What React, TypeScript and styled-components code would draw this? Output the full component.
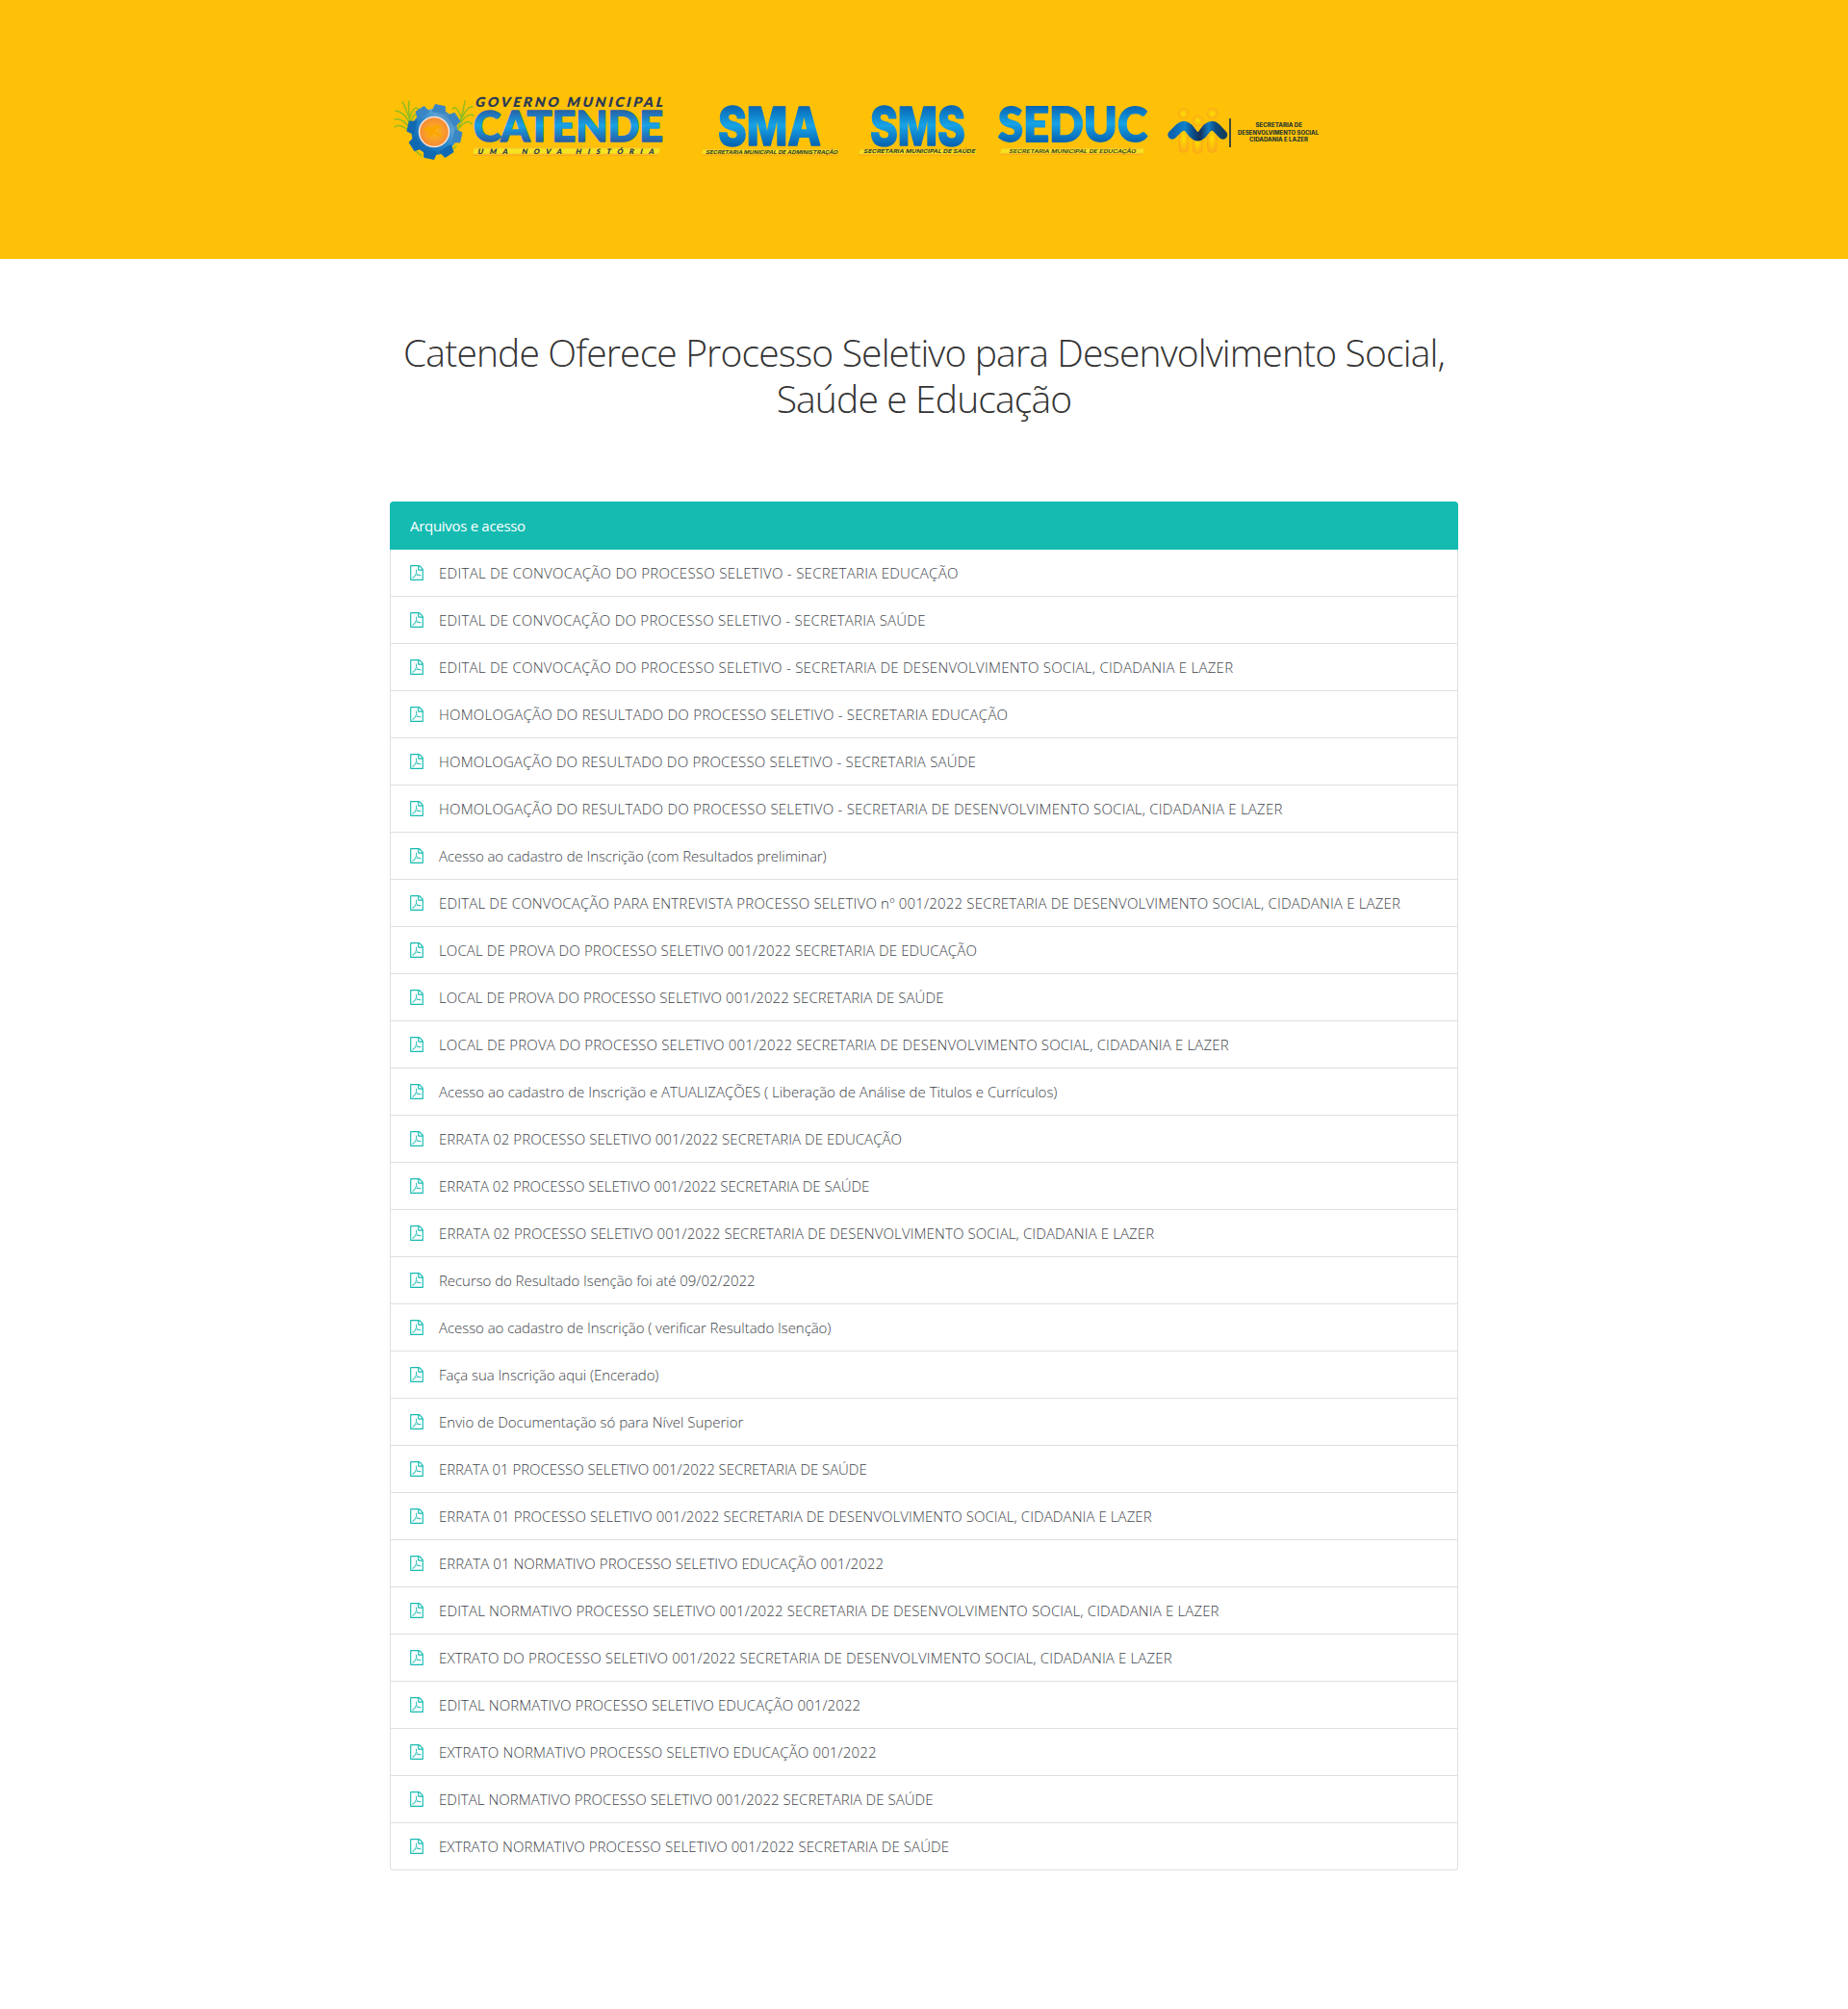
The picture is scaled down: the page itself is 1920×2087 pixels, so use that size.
import React from "react";
import styled, { createGlobalStyle } from "styled-components";

const GlobalStyle = createGlobalStyle`
  *, *::before, *::after { box-sizing: border-box; }
  body {
    margin: 0;
    background: #fff;
    color: #212529;
    font-family: "Segoe UI", "Open Sans", "Noto Sans", sans-serif;
    font-size: 16px;
    font-weight: 300;
    line-height: 24px;
  }
`;

const Header = styled.header`
  height: 269px;
  padding-top: 95px;
  background: #ffc107;
`;

const Container = styled.div`
  width: 1110px;
  margin: 0 auto;
`;

const LogoRow = styled(Container)`
  display: flex;
  align-items: flex-start;
`;

const Logo = styled.svg`
  display: block;
  flex: none;
  height: 75px;
  overflow: visible;
`;

const Title = styled.h1`
  margin: 73px 0 0;
  height: 179px;
  text-align: center;
  font-size: 39px;
  font-weight: 300;
  line-height: 48px;
  letter-spacing: -0.85px;
  white-space: nowrap;
  color: #333;
`;

const List = styled.ul`
  margin: 0 0 144px;
  padding: 0;
  list-style: none;
`;

const ListHeader = styled.li`
  height: 50px;
  padding: 13px 21px;
  border-radius: 4px 4px 0 0;
  background: #15bbb1;
  color: #fff;
  font-size: 15px;
  font-weight: 400;
  letter-spacing: -0.3px;
`;

const Item = styled.li`
  display: flex;
  align-items: center;
  height: 49px;
  padding: 0 20px;
  border: 1px solid #dfdfdf;
  border-top: 0;
  &:last-child { border-radius: 0 0 4px 4px; }
`;

const FileLink = styled.a<{ $tracking: number }>`
  margin-left: 16px;
  color: #3c4248;
  white-space: nowrap;
  text-decoration: none;
  font-size: 15px;
  letter-spacing: ${(p) => p.$tracking}px;
`;

const PdfSvg = styled.svg`
  width: 14px;
  height: 16px;
  flex: none;
  fill: #15bbb1;
`;

const PdfIcon = () => (
  <PdfSvg viewBox="0 0 1536 1792">
    <path d="M1468 380q28 28 48 76t20 88v1152q0 40-28 68t-68 28h-1344q-40 0-68-28t-28-68v-1600q0-40 28-68t68-28h896q40 0 88 20t76 48zM1024 136v376h376q-10-29-22-41l-313-313q-12-12-41-22zM1408 1664v-1024h-416q-40 0-68-28t-28-68v-416h-768v1536h1280zM894 1071q33 26 84 56 59-7 117-7 147 0 177 49 16 22 2 52 0 1-1 2l-2 2v1q-6 38-71 38-48 0-115-20t-130-53q-221 24-392 83-153 262-242 262-15 0-28-7l-24-12q-1-1-6-5-10-10-6-36 9-40 56-91.500t132-96.500q14-9 23 6 2 2 2 4 52-85 107-197 68-136 104-262-24-82-30.500-159.500t6.500-127.500q11-40 42-40h22q23 0 35 15 18 21 9 68-2 6-4 8 1 3 1 8v30q-2 123-14 192 55 164 146 238zM318 1482q52-24 137-158-51 40-87.500 84t-49.500 74zM716 562q-15 42-2 132 1-7 7-44 0-3 7-43 1-4 4-8-1-1-1-2-1-2-1-3-1-22-13-36 0 1-1 2v2zM592 1223q135-54 284-81-2-1-13-9.500t-16-13.500q-76-67-127-176-27 86-83 197-30 56-45 83zM1238 1207q-24-24-140-24 76 28 124 28 14 0 18-1 0-1-2-3z" />
  </PdfSvg>
);

interface WordProps {
  x: number;
  y: number;
  w: number;
  size: number;
  fill: string;
  family?: string;
  weight?: number;
  slant?: boolean;
  stroke?: number;
  spaced?: boolean;
  children: string;
}

/* A word of a logo, fitted to the width w: by its spacing alone if spaced is set. */
const Word = ({ x, y, w, size, fill, family = "Inter", weight = 800, slant, stroke = 0, spaced, children }: WordProps) => (
  <text
    x={0}
    y={0}
    transform={`translate(${x} ${y})${slant ? " skewX(-14)" : ""}`}
    textLength={w}
    lengthAdjust={spaced ? "spacing" : "spacingAndGlyphs"}
    fontFamily={`${family}, sans-serif`}
    fontWeight={weight}
    fontSize={size}
    fill={fill}
    stroke={stroke ? fill : "none"}
    strokeWidth={stroke}
    strokeLinejoin="round"
  >
    {children}
  </text>
);

const Strip = ({ id, x, y, w, h }: { id: string; x: number; y: number; w: number; h: number }) => (
  <>
    <defs>
      <linearGradient id={id} x1="0" y1="0" x2="0" y2="1">
        <stop offset="0" stopColor="#fcb218" />
        <stop offset=".35" stopColor="#f6e324" />
        <stop offset=".65" stopColor="#f6e324" />
        <stop offset="1" stopColor="#fba21c" />
      </linearGradient>
    </defs>
    <path d={`M${x + 2} ${y}H${x + w}L${x + w - 2} ${y + h}H${x}Z`} fill={`url(#${id})`} />
  </>
);

/* Runs from the cap line to the baseline of a Word that is cap pixels high. */
const BlueGradient = ({ id, cap, edge = "#0766b4" }: { id: string; cap: number; edge?: string }) => (
  <defs>
    <linearGradient id={id} gradientUnits="userSpaceOnUse" x1="0" x2="0" y1={-cap} y2={0}>
      <stop offset="0" stopColor={edge} />
      <stop offset=".5" stopColor="#17a3e6" />
      <stop offset="1" stopColor={edge} />
    </linearGradient>
  </defs>
);

const teeth = [0, 45, 90, 135, 180, 225, 270, 315];

const CatendeLogo = () => (
  <Logo width={295} viewBox="405 95 295 75">
    <BlueGradient id="catende" cap={33} edge="#275fa5" />
    <defs>
      <linearGradient id="gear" gradientUnits="userSpaceOnUse" x1="-20" y1="20" x2="20" y2="-20">
        <stop offset="0" stopColor="#0c62ac" />
        <stop offset=".45" stopColor="#2583c8" />
        <stop offset=".75" stopColor="#5aa2d4" />
        <stop offset="1" stopColor="#3f78b0" />
      </linearGradient>
      <radialGradient id="sun">
        <stop offset="0" stopColor="#fcb913" />
        <stop offset="1" stopColor="#f68a3a" />
      </radialGradient>
    </defs>
    <g fill="none" stroke="#8fbc22" strokeWidth="1.5" strokeLinecap="round">
      <path d="M427 137Q424 118 425 105M427 130Q420 116 411 115M426 125Q420 108 418 106M426 122Q430 108 436 114M427 136Q420 122 410 124M427 138Q416 127 410 132M427 126Q431 116 433 120" />
      <path d="M475 137Q481 118 483 105M477 130Q484 110 491 111M476 132Q485 116 492 120M476 134Q486 122 490 129M479 122Q475 109 470 113M478 126Q472 116 471 121" />
      <path d="M432 157l6 5M468 157l6-5" />
    </g>
    <g fill="url(#gear)" transform="translate(451.500 137)">
      <circle r="24" />
      {teeth.map((a) => (
        <path key={a} d="M-7.500 -20L-5.500 -28.500H5.500L7.500 -20Z" transform={`rotate(${a + 12})`} fill={a > 300 || a < 100 ? "#3a86c4" : "#1169b2"} />
      ))}
    </g>
    <circle cx="451" cy="137" r="15.500" fill="url(#sun)" stroke="#f5e3d8" strokeWidth="1.500" />
    <path d="M439 135q5-6 10-2 5-6 10 0-5-1-7 3 4 3 9 6-6 0-10-3-4 3-8 4l4-5q-4-2-8-3z" fill="#fba500" />
    <Word x={493} y={111} w={195} size={14} fill="#2b3a55" family="Lato" weight={800} slant spaced>GOVERNO MUNICIPAL</Word>
    <Word x={492} y={147} w={197} size={44} fill="url(#catende)" family="Lato" weight={900} stroke={1.6}>CATENDE</Word>
    <Strip id="s1" x={491} y={152} w={195} h={10} />
    <Word x={496} y={159.800} w={183} size={7.500} fill="#2b3a55" family="Lato" weight={800} slant spaced>UMA NOVA HISTÓRIA</Word>
  </Logo>
);

const SmaLogo = () => (
  <Logo width={180} viewBox="700 95 180 75">
    <BlueGradient id="sma" cap={40} />
    <Word x={746} y={150.500} w={107} size={55} fill="url(#sma)" stroke={1.5}>SMA</Word>
    <Strip id="s2" x={729} y={154} w={142} h={7.500} />
    <Word x={733} y={159.600} w={137} size={5.600} fill="#33422a" weight={700} slant>SECRETARIA MUNICIPAL DE ADMINISTRAÇÃO</Word>
  </Logo>
);

const SmsLogo = () => (
  <Logo width={145} viewBox="880 95 145 75">
    <BlueGradient id="sms" cap={40} />
    <Word x={904} y={150.500} w={99} size={55} fill="url(#sms)" stroke={1.5}>SMS</Word>
    <Strip id="s3" x={892} y={154} w={123} h={7.500} />
    <Word x={897} y={159.300} w={116} size={5.600} fill="#33422a" weight={700} slant>SECRETARIA MUNICIPAL DE SAÚDE</Word>
  </Logo>
);

const SeducLogo = () => (
  <Logo width={180} viewBox="1025 95 180 75">
    <BlueGradient id="seduc" cap={36} />
    <Word x={1037} y={146.500} w={155} size={49} fill="url(#seduc)" family="Lato" weight={900} stroke={1.8}>SEDUC</Word>
    <Strip id="s4" x={1039} y={153} w={150} h={8} />
    <Word x={1048} y={159.200} w={132} size={5.600} fill="#33422a" weight={600} slant>SECRETARIA MUNICIPAL DE EDUCAÇÃO</Word>
  </Logo>
);

const SocialLogo = () => (
  <Logo width={180} viewBox="1205 95 180 75">
    <defs>
      <radialGradient id="body">
        <stop offset="0" stopColor="#fde000" />
        <stop offset="1" stopColor="#fbab16" />
      </radialGradient>
      <linearGradient id="ribbon">
        <stop offset="0" stopColor="#0d62ae" />
        <stop offset=".25" stopColor="#0f82cc" />
        <stop offset=".42" stopColor="#0b4a85" />
        <stop offset=".55" stopColor="#15305a" />
        <stop offset=".72" stopColor="#0f7cc4" />
        <stop offset=".85" stopColor="#0c4c82" />
        <stop offset="1" stopColor="#12405f" />
      </linearGradient>
    </defs>
    <g fill="url(#body)">
      <circle cx="1229.500" cy="118" r="6" />
      <circle cx="1244.500" cy="125.500" r="6" />
      <circle cx="1259.500" cy="118" r="6" />
      <rect x="1224.500" y="128" width="10.500" height="31" rx="5" />
      <rect x="1239" y="136" width="10.500" height="24" rx="5" />
      <rect x="1254" y="128" width="10.500" height="31" rx="5" />
    </g>
    <path d="M1218 140L1225 133Q1230 128.500 1235 133L1240 139.500Q1244.500 144 1249 139.500L1254 133Q1259.500 128.500 1264 133L1270.500 140" fill="none" stroke="url(#ribbon)" strokeWidth="9.500" strokeLinecap="round" strokeLinejoin="round" />
    <path d="M1278 123V153" stroke="#1f3346" strokeWidth="1.700" />
    <Word x={1304.500} y={131.500} w={48.500} size={5.500} fill="#2b3a30">SECRETARIA DE</Word>
    <Word x={1286} y={139.500} w={84} size={5.500} fill="#2b3a30">DESENVOLVIMENTO SOCIAL</Word>
    <Word x={1298} y={147.300} w={61} size={5.500} fill="#2b3a30">CIDADANIA E LAZER</Word>
  </Logo>
);

/* Name of each file and the letter spacing of its line, in pixels. */
const files: [string, number][] = [
  ["EDITAL DE CONVOCAÇÃO DO PROCESSO SELETIVO - SECRETARIA EDUCAÇÃO", 0.28],
  ["EDITAL DE CONVOCAÇÃO DO PROCESSO SELETIVO - SECRETARIA SAÚDE", 0.243],
  ["EDITAL DE CONVOCAÇÃO DO PROCESSO SELETIVO - SECRETARIA DE DESENVOLVIMENTO SOCIAL, CIDADANIA E LAZER", 0.258],
  ["HOMOLOGAÇÃO DO RESULTADO DO PROCESSO SELETIVO - SECRETARIA EDUCAÇÃO", 0.222],
  ["HOMOLOGAÇÃO DO RESULTADO DO PROCESSO SELETIVO - SECRETARIA SAÚDE", 0.195],
  ["HOMOLOGAÇÃO DO RESULTADO DO PROCESSO SELETIVO - SECRETARIA DE DESENVOLVIMENTO SOCIAL, CIDADANIA E LAZER", 0.217],
  ["Acesso ao cadastro de Inscrição (com Resultados preliminar)", -0.08],
  ["EDITAL DE CONVOCAÇÃO PARA ENTREVISTA PROCESSO SELETIVO nº 001/2022 SECRETARIA DE DESENVOLVIMENTO SOCIAL, CIDADANIA E LAZER", 0.178],
  ["LOCAL DE PROVA DO PROCESSO SELETIVO 001/2022 SECRETARIA DE EDUCAÇÃO", 0.135],
  ["LOCAL DE PROVA DO PROCESSO SELETIVO 001/2022 SECRETARIA DE SAÚDE", 0.085],
  ["LOCAL DE PROVA DO PROCESSO SELETIVO 001/2022 SECRETARIA DE DESENVOLVIMENTO SOCIAL, CIDADANIA E LAZER", 0.159],
  ["Acesso ao cadastro de Inscrição e ATUALIZAÇÕES ( Liberação de Análise de Titulos e Currículos)", 0],
  ["ERRATA 02 PROCESSO SELETIVO 001/2022 SECRETARIA DE EDUCAÇÃO", 0.045],
  ["ERRATA 02 PROCESSO SELETIVO 001/2022 SECRETARIA DE SAÚDE", -0.003],
  ["ERRATA 02 PROCESSO SELETIVO 001/2022 SECRETARIA DE DESENVOLVIMENTO SOCIAL, CIDADANIA E LAZER", 0.107],
  ["Recurso do Resultado Isenção foi até 09/02/2022", -0.06],
  ["Acesso ao cadastro de Inscrição ( verificar Resultado Isenção)", -0.055],
  ["Faça sua Inscrição aqui (Encerado)", -0.08],
  ["Envio de Documentação só para Nível Superior", -0.005],
  ["ERRATA 01 PROCESSO SELETIVO 001/2022 SECRETARIA DE SAÚDE", -0.051],
  ["ERRATA 01 PROCESSO SELETIVO 001/2022 SECRETARIA DE DESENVOLVIMENTO SOCIAL, CIDADANIA E LAZER", 0.08],
  ["ERRATA 01 NORMATIVO PROCESSO SELETIVO EDUCAÇÃO 001/2022", 0.055],
  ["EDITAL NORMATIVO PROCESSO SELETIVO 001/2022 SECRETARIA DE DESENVOLVIMENTO SOCIAL, CIDADANIA E LAZER", 0.144],
  ["EXTRATO DO PROCESSO SELETIVO 001/2022 SECRETARIA DE DESENVOLVIMENTO SOCIAL, CIDADANIA E LAZER", 0.151],
  ["EDITAL NORMATIVO PROCESSO SELETIVO EDUCAÇÃO 001/2022", 0.097],
  ["EXTRATO NORMATIVO PROCESSO SELETIVO EDUCAÇÃO 001/2022", 0.135],
  ["EDITAL NORMATIVO PROCESSO SELETIVO 001/2022 SECRETARIA DE SAÚDE", 0.048],
  ["EXTRATO NORMATIVO PROCESSO SELETIVO 001/2022 SECRETARIA DE SAÚDE", 0.083],
];

export default function App() {
  return (
    <>
      <GlobalStyle />
      <Header>
        <LogoRow>
          <CatendeLogo />
          <SmaLogo />
          <SmsLogo />
          <SeducLogo />
          <SocialLogo />
        </LogoRow>
      </Header>
      <Container as="main">
        <Title>
          Catende Oferece Processo Seletivo para Desenvolvimento Social,
          <br />
          Saúde e Educação
        </Title>
        <List>
          <ListHeader>Arquivos e acesso</ListHeader>
          {files.map(([name, tracking]) => (
            <Item key={name}>
              <PdfIcon />
              <FileLink href="#" $tracking={tracking}>{name}</FileLink>
            </Item>
          ))}
        </List>
      </Container>
    </>
  );
}
